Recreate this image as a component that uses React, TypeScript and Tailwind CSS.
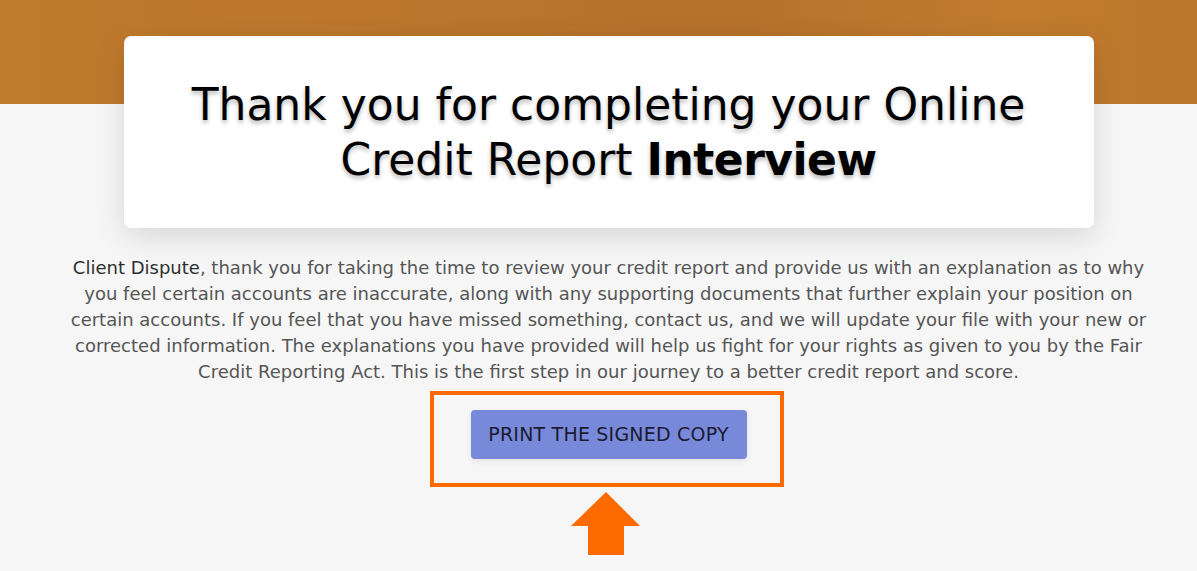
export default function App() {
  return (
    <div className="min-h-screen bg-[linear-gradient(to_bottom,transparent_0,transparent_104px,#f6f6f6_104px)] font-['DejaVu_Sans',sans-serif]">
      <div className="h-[104px] bg-[linear-gradient(to_right,#c07a2e,#bd762c_30%,#b6712a_60%,#c27b2f_85%,#bd772c)] -mb-[104px]" />
      <div className="relative flex flex-col items-center pl-[20px] pt-[36px]">
        <div className="w-[970px] rounded-[7px] bg-white py-[41px] text-center shadow-[0_8px_30px_rgba(0,0,0,0.13)]">
          <h1 className="text-[44px] leading-[55px] text-black [text-shadow:0_3px_4px_rgba(0,0,0,0.28)]">
            Thank you for completing your Online
            <br />
            Credit Report <span className="font-bold tracking-[-0.5px]">Interview</span>
          </h1>
        </div>

        <p className="mt-[27px] w-[1095px] text-center text-[18px] leading-[26px] text-[#555555]">
          <span className="text-[#2f2f2f]">Client Dispute</span>, thank you for taking the time to review
          your credit report and provide us with an explanation as to why you feel certain accounts are inaccurate,
          along with any supporting documents that further explain your position on certain accounts. If you feel that
          you have missed something, contact us, and we will update your file with your new or corrected information.
          The explanations you have provided will help us fight for your rights as given to you by the Fair Credit
          Reporting Act. This is the first step in our journey to a better credit report and score.
        </p>

        <div className="mt-[6px] mr-[4px] flex w-[354px] justify-center border-4 border-[#ff6a00] pt-[15px] pb-[24px] pl-[4px]">
          <button className="h-[49px] w-[276px] rounded-[4px] bg-[#7889da] text-[19px] tracking-[0.2px] text-[#1b1b30] shadow-[0_2px_6px_rgba(0,0,0,0.08)]">
            PRINT THE SIGNED COPY
          </button>
        </div>

        <svg className="mt-[5px] mr-[5px]" width="70" height="63" viewBox="0 0 70 63">
          <polygon points="35,0 69,34 53,34 53,63 17,63 17,34 0,34" fill="#ff6a00" />
        </svg>
      </div>
    </div>
  )
}
